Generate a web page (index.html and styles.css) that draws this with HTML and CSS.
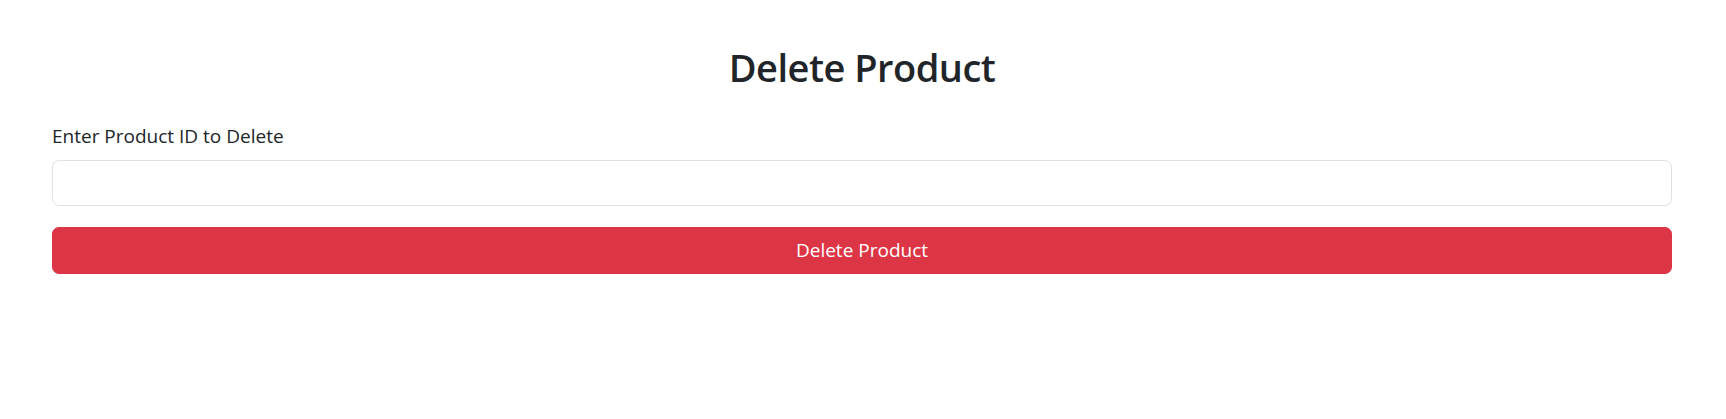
FILE: index.html
```html
<!DOCTYPE html>
<html lang="en">
<head>
<meta charset="utf-8">
<title>Delete Product</title>
<link rel="stylesheet" href="styles.css">
</head>
<body>
<main class="container">
  <h2 class="title">Delete Product</h2>
  <form class="delete-form">
    <label class="form-label" for="productId">Enter Product ID to Delete</label>
    <input class="form-control" type="text" id="productId">
    <button class="btn-delete" type="button">Delete Product</button>
  </form>
</main>
</body>
</html>
```
FILE: styles.css
```css
html, body {
  margin: 0;
  padding: 0;
  background: #ffffff;
}
body {
  font-family: "Open Sans", "Noto Sans", sans-serif;
  color: #212529;
}
.container {
  width: 1620px;
  margin-left: 52px;
  padding-top: 44px;
}
.title {
  margin: 0 0 32px;
  font-size: 38px;
  line-height: 46px;
  font-weight: 600;
  letter-spacing: -0.5px;
  text-align: center;
  color: #212529;
}
.delete-form {
  display: flex;
  flex-direction: column;
}
.form-label {
  display: block;
  font-size: 19px;
  line-height: 28px;
  margin-bottom: 10px;
  color: #212529;
}
.form-control {
  box-sizing: border-box;
  display: block;
  width: 100%;
  height: 46px;
  padding: 9px 14px;
  font-family: inherit;
  font-size: 19px;
  line-height: 26px;
  border: 1px solid #dee2e6;
  border-radius: 7px;
  background: #fff;
  color: #212529;
  margin: 0 0 21px;
  outline: none;
}
.btn-delete {
  box-sizing: border-box;
  display: block;
  width: 100%;
  height: 47px;
  padding: 9px 14px;
  font-family: inherit;
  font-size: 19px;
  line-height: 27px;
  color: #ffffff;
  background: #dc3545;
  border: 1px solid #dc3545;
  border-radius: 7px;
  cursor: pointer;
}
```
